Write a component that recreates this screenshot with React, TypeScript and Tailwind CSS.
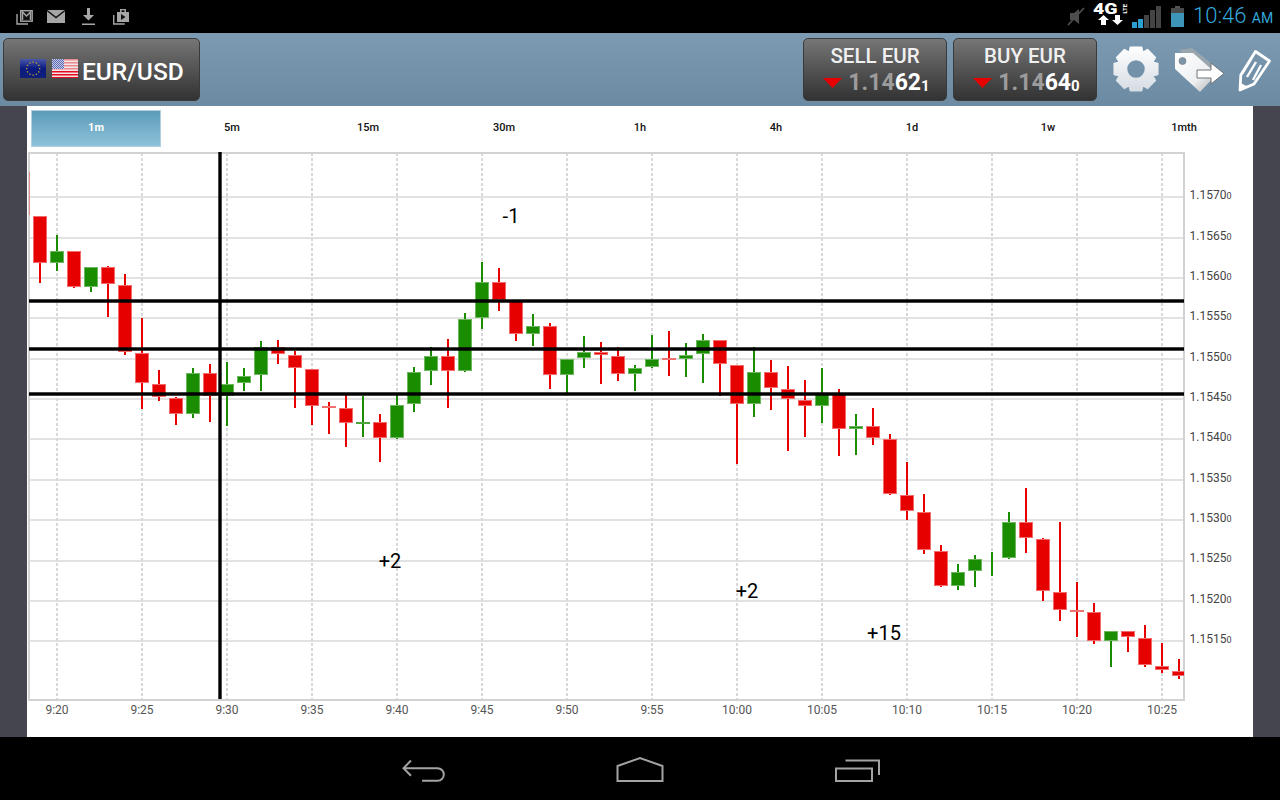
import React from "react";

type C = [number, number, number, number, "r" | "g"];
// body top, body bottom, wick top, wick bottom, colour; index gives x = 40 + 17 * i
const candles: C[] = [
  [216, 263, 216, 283, "r"], [251, 263, 235, 271, "g"], [251, 287, 251, 288, "r"], [267, 287, 267, 292, "g"],
  [267, 284, 266, 317, "r"], [285, 352, 274, 355, "r"], [353, 383, 318, 409, "r"], [384, 397, 370, 401, "r"],
  [398, 414, 397, 425, "r"], [373, 414, 368, 418, "g"], [373, 396, 364, 422, "r"], [384, 396, 362, 426, "g"],
  [376, 383, 368, 391, "g"], [347, 375, 341, 391, "g"], [347, 354, 340, 364, "r"], [355, 368, 351, 408, "r"],
  [369, 406, 369, 425, "r"], [406, 407, 402, 434, "r"], [408, 423, 394, 447, "r"], [422, 423, 396, 437, "g"],
  [422, 438, 414, 462, "r"], [405, 438, 394, 439, "g"], [372, 404, 367, 412, "g"], [356, 371, 347, 385, "g"],
  [356, 371, 339, 408, "r"], [319, 371, 313, 372, "g"], [282, 318, 262, 329, "g"], [282, 300, 268, 311, "r"],
  [301, 334, 301, 341, "r"], [326, 334, 314, 346, "g"], [326, 375, 323, 389, "r"], [359, 375, 359, 393, "g"],
  [352, 358, 336, 368, "g"], [352, 355, 342, 384, "r"], [356, 374, 347, 381, "r"], [368, 374, 365, 391, "g"],
  [359, 367, 335, 368, "g"], [358, 359, 331, 376, "r"], [355, 359, 343, 377, "g"], [340, 354, 334, 383, "g"],
  [340, 364, 340, 396, "r"], [365, 404, 365, 464, "r"], [372, 404, 347, 417, "g"], [372, 388, 360, 410, "r"],
  [389, 399, 366, 451, "r"], [400, 406, 380, 437, "r"], [393, 406, 368, 423, "g"], [393, 429, 389, 456, "r"],
  [426, 429, 414, 455, "g"], [426, 438, 408, 445, "r"], [439, 494, 434, 495, "r"], [495, 511, 462, 520, "r"],
  [512, 550, 494, 554, "r"], [551, 586, 545, 587, "r"], [572, 586, 564, 590, "g"], [559, 571, 555, 587, "g"],
  [0, 0, 552, 576, "g"], [522, 558, 512, 559, "g"], [522, 538, 488, 553, "r"], [539, 591, 538, 601, "r"],
  [592, 610, 522, 621, "r"], [610, 611, 582, 637, "r"], [612, 641, 603, 644, "r"], [631, 641, 631, 667, "g"],
  [631, 637, 631, 652, "r"], [638, 665, 625, 667, "r"], [666, 670, 643, 673, "r"], [671, 676, 659, 679, "r"],
];

const hLines = [197, 238, 278, 318, 359, 399, 439, 480, 520, 561, 601, 641];
const prices: [string, number][] = [
  ["1.1570", 195], ["1.1565", 236], ["1.1560", 276], ["1.1555", 316], ["1.1550", 357], ["1.1545", 397],
  ["1.1540", 437], ["1.1535", 478], ["1.1530", 518], ["1.1525", 558], ["1.1520", 599], ["1.1515", 639],
];
const times = ["9:20", "9:25", "9:30", "9:35", "9:40", "9:45", "9:50", "9:55", "10:00", "10:05", "10:10", "10:15", "10:20", "10:25"];
const tabs = ["1m", "5m", "15m", "30m", "1h", "4h", "1d", "1w", "1mth"];
const notes: [string, number, number][] = [["-1", 511, 216], ["+2", 390, 561], ["+2", 747, 591], ["+15", 884, 633]];

function Chart() {
  return (
    <svg width="1226" height="589" viewBox="27 148 1226 589" className="block font-['Roboto',sans-serif]">
      {hLines.map((y) => (
        <rect key={y} x="29" y={y - 1} width="1155" height="2" fill="#e2e2e2" />
      ))}
      {times.map((t, i) => (
        <line key={t} x1={57 + 85 * i} x2={57 + 85 * i} y1="153" y2="699" stroke="#d8d8d8" strokeWidth="2" strokeDasharray="3 2" />
      ))}
      <rect x="29" y="153" width="1155" height="547" fill="none" stroke="#d2d2d2" strokeWidth="2" />
      <rect x="29" y="172" width="1" height="43" fill="#e88a8a" />
      <svg x="29" y="153" width="1155" height="546" viewBox="29 153 1155 546">
        {candles.map(([top, bot, wt, wb, col], i) => {
          const cx = 40 + 17 * i;
          const fill = col === "r" ? "#e60000" : "#1a8c00";
          const edge = col === "r" ? "#f26a6a" : "#6db85e";
          const doji = bot - top <= 1;
          return (
            <g key={i}>
              <rect x={cx - 1} y={wt} width="2" height={wb - wt} fill={fill} />
              {top > 0 && !doji && (
                <rect x={cx - 6.5} y={top + 0.5} width="13" height={bot - top - 1} fill={fill} stroke={edge} strokeWidth="1" />
              )}
              {doji && <rect x={cx - 7} y={top} width="14" height="2" fill={col === "r" ? "#f07070" : "#4aa63a"} />}
            </g>
          );
        })}
      </svg>
      {[301, 349, 394].map((y) => (
        <g key={y}>
          <rect x="29" y={y - 2} width="1155" height="4" fill="#000" fillOpacity="0.45" />
          <rect x="29" y={y - 1.5} width="1155" height="3" fill="#000" />
        </g>
      ))}
      <rect x="218" y="152" width="4" height="547" fill="#000" fillOpacity="0.4" />
      <rect x="218.500" y="152" width="3" height="547" fill="#000" />
      {prices.map(([p, y]) => (
        <text key={p} x="1189.500" y={y + 4} fontSize="12" fill="#444">
          {p}
          <tspan fontSize="9">0</tspan>
        </text>
      ))}
      {times.map((t, i) => (
        <text key={t} x={57 + 85 * i} y="714" fontSize="12" fill="#555" textAnchor="middle">
          {t}
        </text>
      ))}
      {notes.map(([t, x, y]) => (
        <text key={x} x={x} y={y + 7} fontSize="20" fill="#000" textAnchor="middle">
          {t}
        </text>
      ))}
    </svg>
  );
}

function StatusLeft() {
  const g = "#a6a6a6";
  return (
    <div className="flex items-center">
      <svg width="20" height="18" viewBox="15 8 20 18" className="ml-[15px]">
        <path d="M17 14v10h11" fill="none" stroke={g} strokeWidth="1.4" />
        <rect x="20.7" y="10.7" width="11.5" height="10.5" fill="#111" stroke={g} strokeWidth="1.4" />
        <path d="M22.5 20v-8l4 4 4-4v8" fill="none" stroke={g} strokeWidth="1.4" />
      </svg>
      <svg width="20" height="16" viewBox="46 9 20 16" className="ml-[11px]">
        <rect x="47" y="10" width="18" height="13" fill={g} />
        <path d="M47 10.5l9 7 9-7" fill="none" stroke="#111" strokeWidth="1.5" />
      </svg>
      <svg width="16" height="19" viewBox="81 7 16 19" className="ml-[15px]">
        <path d="M87 8h3v7h4l-5.500 5.500L83 15h4z" fill={g} />
        <rect x="82" y="23.500" width="13" height="1.500" fill={g} />
      </svg>
      <svg width="20" height="18" viewBox="110 7 20 18" className="ml-[14px]">
        <path d="M112.700 14v9h11" fill="none" stroke={g} strokeWidth="1.400" />
        <path d="M116 11h3v-3h6v3h3v10h-12z" fill={g} />
        <rect x="120.500" y="9.200" width="3" height="1.800" fill="#111" />
        <path d="M120 13l4.500 3-4.500 3z" fill="#111" />
      </svg>
    </div>
  );
}

function Arrow({ down }: { down?: boolean }) {
  return (
    <svg width="11" height="10" viewBox="0 0 11 10">
      <path d={down ? "M3 0h5v5h3l-5.500 5L0 5h3z" : "M3 10h5V5h3L5.500 0 0 5h3z"} fill="#fff" />
    </svg>
  );
}

function StatusRight() {
  return (
    <div className="flex items-center">
      <svg width="20" height="19" viewBox="1066 7 20 19">
        <path d="M1070 13h4l5-4v15l-5-4h-4z" fill="#4d4d4d" />
        <path d="M1068 25l16-17" stroke="#4d4d4d" strokeWidth="1.800" />
      </svg>
      <div className="ml-[7px] -mt-[5px] flex w-[37px] flex-col">
        <div className="flex h-[12px] items-start">
          <span className="w-[27px] origin-left scale-x-[1.300] text-[15px] leading-[12px] font-black whitespace-nowrap text-white">4G</span>
          <span className="mt-[2px] ml-[-1px] h-[7px] w-[10px] origin-center -rotate-90 text-[6px] leading-[7px] font-bold whitespace-nowrap text-white">LTE</span>
        </div>
        <div className="flex gap-[3px] pl-[5px]">
          <Arrow />
          <Arrow down />
        </div>
      </div>
      <div className="ml-[2px] flex h-[22px] items-end gap-[1px]">
        {[6, 9, 13, 18, 22].map((h, i) => (
          <div key={h} style={{ height: h }} className={i < 2 ? "w-[5px] bg-[#2a9fd0]" : "w-[5px] bg-[#444444]"} />
        ))}
      </div>
      <svg width="13" height="21" viewBox="1171 5 13 21" className="ml-[10px]">
        <rect x="1175" y="5" width="5" height="3" fill="#555" />
        <rect x="1171" y="7" width="13" height="19" fill="#3d95ba" />
        <rect x="1171" y="7" width="13" height="5" fill="#4a4a4a" />
      </svg>
      <div className="ml-[9px] w-[79px] text-[22px] leading-[33px] font-light whitespace-nowrap text-[#33a9dc]">
        10:46 <span className="text-[14px] font-normal">AM</span>
      </div>
    </div>
  );
}

function EuFlag() {
  const stars = Array.from({ length: 12 }, (_, i) => i * (Math.PI / 6));
  return (
    <svg width="26" height="19" viewBox="0 0 26 19">
      <defs>
        <linearGradient id="eu" x1="0" y1="0" x2="0" y2="1">
          <stop offset="0" stopColor="#4a58a8" />
          <stop offset="0.5" stopColor="#0a1a80" />
          <stop offset="1" stopColor="#101f78" />
        </linearGradient>
      </defs>
      <rect width="26" height="19" fill="url(#eu)" />
      {stars.map((a, i) => (
        <rect key={i} x={12.500 + 6.500 * Math.cos(a)} y={9 + 6.500 * Math.sin(a)} width="1.300" height="1.300" fill="#c9a92a" />
      ))}
    </svg>
  );
}

function UsFlag() {
  return (
    <svg width="26" height="19" viewBox="0 0 26 19">
      <defs>
        <pattern id="chk" width="2" height="2" patternUnits="userSpaceOnUse">
          <rect width="2" height="2" fill="#5a6ab0" />
          <rect width="1" height="1" fill="#c8cce8" />
          <rect x="1" y="1" width="1" height="1" fill="#c8cce8" />
        </pattern>
      </defs>
      <rect width="26" height="19" fill="#f4e6e6" />
      {[0, 3, 6, 9, 12, 15, 18].map((y) => (
        <rect key={y} y={y} width="26" height={y === 18 ? 1 : 1.500} fill={y > 9 ? "#e60a1e" : "#e88a90"} />
      ))}
      <rect width="12" height="10" fill="url(#chk)" />
    </svg>
  );
}

function Gear() {
  const cx = 24;
  const cy = 24;
  let d = "";
  const n = 8;
  for (let i = 0; i < n; i++) {
    const a = (i * 2 * Math.PI) / n - Math.PI / 2;
    const pts: [number, number][] = [
      [18, a - 0.39],
      [22.500, a - 0.25],
      [22.500, a + 0.25],
      [18, a + 0.39],
    ];
    pts.forEach(([r, t]) => {
      d += `${d ? "L" : "M"}${(cx + r * Math.cos(t)).toFixed(1)} ${(cy + r * Math.sin(t)).toFixed(1)}`;
    });
  }
  d += "Z M33.500 24a9.500 9.500 0 1 0-19 0a9.500 9.500 0 1 0 19 0Z";
  return (
    <svg width="48" height="48" viewBox="0 0 48 48">
      <defs>
        <linearGradient id="gear" x1="0" y1="0" x2="0" y2="1">
          <stop offset="0" stopColor="#ffffff" />
          <stop offset="1" stopColor="#d5dce3" />
        </linearGradient>
      </defs>
      <path d={d} fill="url(#gear)" fillRule="evenodd" stroke="url(#gear)" strokeLinejoin="round" strokeWidth="1.500" />
    </svg>
  );
}

function Tag() {
  return (
    <svg width="52" height="46" viewBox="1174 47 52 46">
      <defs>
        <linearGradient id="tg" x1="0" y1="0" x2="1" y2="1">
          <stop offset="0" stopColor="#ffffff" />
          <stop offset="0.6" stopColor="#eef0f2" />
          <stop offset="1" stopColor="#a9acae" />
        </linearGradient>
      </defs>
      <path d="M1179 50l13-2 25 20-10 8z" fill="#9aa6ae" />
      <path d="M1175 53h18l24 21-17 18-25-23z" fill="url(#tg)" />
      <circle cx="1182.500" cy="61" r="3.500" fill="#7a96ab" stroke="#888" strokeWidth="0.800" />
      <path d="M1197 70h14v-7l13 10.500-13 10.500v-6h-14z" fill="#fff" stroke="#6e7478" strokeWidth="1" />
    </svg>
  );
}

function Pencil() {
  return (
    <svg width="34" height="44" viewBox="1238 49 34 44">
      <path d="M1240 90l0.800-15 14.700-23.500 14 9.500-15.500 23z" fill="none" stroke="#fff" strokeWidth="2.800" strokeLinejoin="round" />
      <path d="M1251 59l-9 15M1256 62l-9 15M1261 65l-8 15" stroke="#fff" strokeWidth="2.400" />
      <path d="M1240 91l0.500-8 7 3.500z" fill="#fff" />
    </svg>
  );
}

function QuoteButton({ label, mid, small, ml }: { label: string; mid: string; small: string; ml: string }) {
  return (
    <button className={`${ml} flex h-[63px] w-[144px] flex-col items-center rounded-[5px] border border-[#3a3a3a] bg-gradient-to-b from-[#767676] to-[#333333]`}>
      <span className="mt-[4px] text-[20.500px] leading-[26px] font-medium text-[#f0f0f0]">{label}</span>
      <span className="mt-[1px] ml-[3px] flex items-center text-[23px] leading-[26px] font-bold">
        <svg width="19" height="10" viewBox="0 0 19 10" className="mr-[6px]">
          <path d="M0 0h19L9.500 10z" fill="#e60000" />
        </svg>
        <span className="text-[#9c9c9c]">1.14</span>
        <span className="text-white">{mid}</span>
        <span className="mt-[5px] text-[15px] leading-[20px] text-white">{small}</span>
      </span>
    </button>
  );
}

export default function App() {
  return (
    <div className="flex h-[800px] w-[1280px] flex-col overflow-hidden bg-black font-['Roboto',sans-serif]">
      <div className="flex h-[33px] items-center justify-between bg-black pr-[8px]">
        <StatusLeft />
        <StatusRight />
      </div>
      <div className="flex h-[73px] items-start bg-gradient-to-b from-[#7c9bb2] to-[#6c8aa2] pt-[5px]">
        <button className="ml-[3px] flex h-[63px] w-[197px] items-center rounded-[5px] border border-[#3a3a3a] bg-gradient-to-b from-[#767676] to-[#333333] pl-[16px]">
          <span className="-mt-[3px]"><EuFlag /></span>
          <span className="-mt-[3px] ml-[6px]"><UsFlag /></span>
          <span className="mt-[4px] ml-[4px] text-[24.500px] leading-[28px] font-medium text-white">EUR/USD</span>
        </button>
        <QuoteButton ml="ml-[603px]" label="SELL EUR" mid="62" small="1" />
        <QuoteButton ml="ml-[6px]" label="BUY EUR" mid="64" small="0" />
        <div className="ml-[15px] mt-[7px]"><Gear /></div>
        <div className="ml-[14px] mt-[9px]"><Tag /></div>
        <div className="ml-[12px] mt-[11px]"><Pencil /></div>
      </div>
      <div className="flex-1 bg-[#45454f] px-[27px]">
        <div className="h-[631px] bg-white">
          <div className="flex h-[42px] px-px">
            {tabs.map((t, i) => (
              <div key={t} className="flex h-[42px] w-[136px] items-center justify-center pt-[4px] pb-[1px]">
                <div
                  className={
                    i === 0
                      ? "flex h-[37px] w-[130px] items-center justify-center border border-[#b4d0de] bg-gradient-to-b from-[#5b9cb9] to-[#8fc2da] text-[11px] font-bold text-white"
                      : "text-[11px] font-medium text-[#111111]"
                  }
                >
                  {t}
                </div>
              </div>
            ))}
          </div>
          <Chart />
        </div>
      </div>
      <div className="flex h-[63px] items-center justify-center bg-black">
        <div className="flex w-[216px] justify-center">
          <svg width="48" height="32" viewBox="400 752 48 32">
            <path d="M411 759.500l-7.500 7.700 7.500 7.500M404 767.200h33.500a6.300 6.300 0 0 1 0 12.600H422" fill="none" stroke="#a3a3a3" strokeWidth="2" />
          </svg>
        </div>
        <div className="flex w-[216px] justify-center">
          <svg width="50" height="32" viewBox="615 752 50 32">
            <path d="M617.500 780v-15l22.500-8 22.500 8v15z" fill="none" stroke="#a3a3a3" strokeWidth="2" />
          </svg>
        </div>
        <div className="flex w-[216px] justify-center">
          <svg width="48" height="32" viewBox="832 752 48 32">
            <rect x="836" y="767.500" width="36" height="12.500" fill="none" stroke="#a3a3a3" strokeWidth="2" />
            <path d="M845.500 759.500H879V774" fill="none" stroke="#a3a3a3" strokeWidth="2" />
          </svg>
        </div>
      </div>
    </div>
  );
}
